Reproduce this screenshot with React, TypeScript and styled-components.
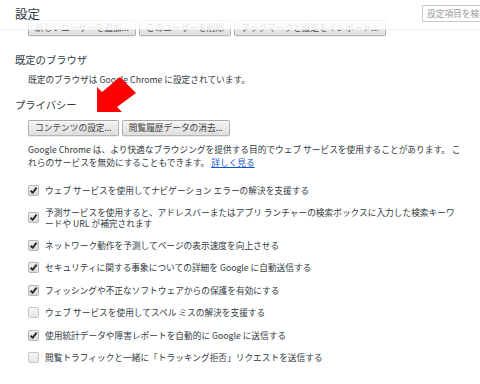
import { ReactElement } from 'react';
import styled, { createGlobalStyle } from 'styled-components';

const GlobalStyle = createGlobalStyle`
  html, body {
    margin: 0;
    padding: 0;
    background: #fff;
  }
  body {
    font-family: 'Noto Sans CJK JP', 'Noto Sans', sans-serif;
    color: #303942;
    width: 480px;
    height: 384px;
    overflow: hidden;
  }
`;

const Page = styled.div`
  position: relative;
  width: 480px;
  height: 384px;
  overflow: hidden;
`;

const Header = styled.header`
  position: absolute;
  top: 0;
  left: 0;
  right: 0;
  height: 30px;
  z-index: 5;
  display: flex;
  align-items: center;
  justify-content: space-between;
  padding: 0 0 0 15px;
  background: rgba(255, 255, 255, 0.86);
  border-bottom: 1px solid rgba(0, 0, 0, 0.06);
  box-sizing: border-box;
`;

const Title = styled.h1`
  margin: 0;
  font-size: 12.5px;
  font-weight: 400;
  line-height: 14px;
  color: #303942;
  margin-top: -2px;
`;

const Search = styled.input`
  width: 70px;
  height: 17px;
  margin-right: -12px;
  margin-top: -3px;
  box-sizing: border-box;
  border: 1px solid #c8c8c8;
  border-radius: 1px;
  padding: 0 4px;
  font-family: inherit;
  font-size: 8.7px;
  outline: none;
  &::placeholder {
    color: #9a9a9a;
  }
`;

const Content = styled.main`
  padding: 20px 0 0 15px;
`;

const ButtonRow = styled.div<{ top?: number }>`
  display: flex;
  gap: 3px;
  margin-top: ${({ top }) => top ?? 0}px;
  padding-left: 13px;
`;

const Button = styled.button`
  height: 16px;
  padding: 0 6px;
  box-sizing: border-box;
  font-family: inherit;
  font-size: 8.7px;
  line-height: 14px;
  color: #444;
  border: 1px solid rgba(0, 0, 0, 0.25);
  border-radius: 2px;
  background: linear-gradient(#f4f4f4, #dedede);
  box-shadow: 0 1px 0 rgba(0, 0, 0, 0.08), inset 0 1px 2px rgba(255, 255, 255, 0.75);
  white-space: nowrap;
`;

const Section = styled.section<{ top: number }>`
  margin-top: ${({ top }) => top}px;
`;

const Heading = styled.h3`
  margin: 0;
  font-size: 10.3px;
  font-weight: 400;
  line-height: 13px;
  color: #303942;
`;

const Body = styled.div`
  padding-left: 13px;
  font-size: 8.7px;
  line-height: 13px;
`;

const Text = styled.p<{ top: number }>`
  margin: ${({ top }) => top}px 0 0;
  width: 433px;
`;

const LearnMore = styled.a`
  color: #15c;
  text-decoration: underline;
`;

const CheckList = styled.div`
  margin-top: 10px;
  display: flex;
  flex-direction: column;
`;

const CheckRow = styled.label<{ tall?: boolean }>`
  display: flex;
  align-items: center;
  gap: 6px;
  min-height: ${({ tall }) => (tall ? 33 : 22.4)}px;
  line-height: 11px;
`;

const Box = styled.span<{ checked?: boolean }>`
  flex: none;
  width: 11px;
  height: 11px;
  box-sizing: border-box;
  border: 1px solid ${({ checked }) => (checked ? '#b4b4b4' : '#c6c6c6')};
  border-radius: 2px;
  background: ${({ checked }) => (checked ? 'linear-gradient(#f0f0f0, #dcdcdc)' : 'linear-gradient(#f6f6f6, #e6e6e6)')};
  display: flex;
  align-items: center;
  justify-content: center;
`;

const Label = styled.span`
  width: 416px;
`;

const Arrow = styled.svg`
  position: absolute;
  left: 0;
  top: 0;
  z-index: 4;
  pointer-events: none;
`;

interface Option {
  text: string;
  checked: boolean;
  tall?: boolean;
}

const options: Option[] = [
  { text: 'ウェブ サービスを使用してナビゲーション エラーの解決を支援する', checked: true },
  {
    text: '予測サービスを使用すると、アドレスバーまたはアプリ ランチャーの検索ボックスに入力した検索キーワードや URL が補完されます',
    checked: true,
    tall: true,
  },
  { text: 'ネットワーク動作を予測してページの表示速度を向上させる', checked: true },
  { text: 'セキュリティに関する事象についての詳細を Google に自動送信する', checked: true },
  { text: 'フィッシングや不正なソフトウェアからの保護を有効にする', checked: true },
  { text: 'ウェブ サービスを使用してスペル ミスの解決を支援する', checked: false },
  { text: '使用統計データや障害レポートを自動的に Google に送信する', checked: true },
  { text: '閲覧トラフィックと一緒に「トラッキング拒否」リクエストを送信する', checked: false },
];

function Check({ checked }: { checked: boolean }): ReactElement {
  return (
    <Box checked={checked}>
      {checked && (
        <svg width="9" height="9" viewBox="0 0 9 9">
          <path d="M1.6 4.6 L3.6 6.8 L7.6 1.6" fill="none" stroke="#2b2b2b" strokeWidth="1.9" strokeLinejoin="round" />
        </svg>
      )}
    </Box>
  );
}

export default function App(): ReactElement {
  return (
    <Page>
      <GlobalStyle />
      <Header>
        <Title>設定</Title>
        <Search placeholder="設定項目を検索" />
      </Header>
      <Content>
        <ButtonRow>
          <Button>新しいユーザーを追加...</Button>
          <Button>このユーザーを削除</Button>
          <Button>ブックマークと設定をインポート...</Button>
        </ButtonRow>
        <Section top={17}>
          <Heading>既定のブラウザ</Heading>
          <Body>
            <Text top={7}>既定のブラウザは Google Chrome に設定されています。</Text>
          </Body>
        </Section>
        <Section top={12}>
          <Heading>プライバシー</Heading>
          <ButtonRow top={9}>
            <Button>コンテンツの設定...</Button>
            <Button>閲覧履歴データの消去...</Button>
          </ButtonRow>
          <Body>
            <Text top={7}>
              Google Chrome は、より快適なブラウジングを提供する目的でウェブ サービスを使用することがあります。
              これらのサービスを無効にすることもできます。 <LearnMore href="#">詳しく見る</LearnMore>
            </Text>
            <CheckList>
              {options.map(({ text, checked, tall }) => (
                <CheckRow key={text} tall={tall}>
                  <Check checked={checked} />
                  <Label>{text}</Label>
                </CheckRow>
              ))}
            </CheckList>
          </Body>
        </Section>
      </Content>
      <Arrow width="480" height="384" viewBox="0 0 480 384">
        <polygon points="97,112 97,87 102,92 120,77 136,93 117,107 122,112" fill="#ff0000" />
      </Arrow>
    </Page>
  );
}
